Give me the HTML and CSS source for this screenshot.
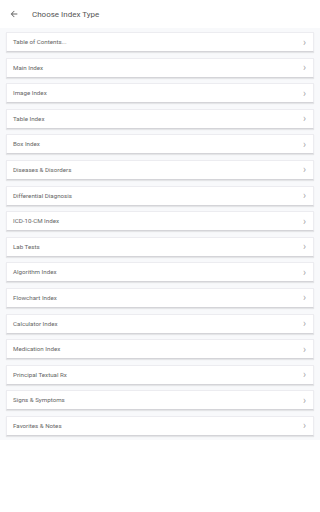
FILE: index.html
```html
<!DOCTYPE html>
<html lang="en">
<head>
    <meta charset="UTF-8">
    <meta name="viewport" content="width=device-width, initial-scale=1.0">
    <title>Choose Index Type</title>
    <link rel="stylesheet" href="styles.css">
</head>
<body>
    <div class="header">
        <svg class="back" viewBox="0 0 24 24" width="10" height="10"><path d="M20 11H7.8l5.6-5.6L12 4l-8 8 8 8 1.4-1.4L7.8 13H20z" fill="#666"/></svg>
        <h1>Choose Index Type</h1>
    </div>

    <div class="list">
        <div class="item"><span>Table of Contents...</span><i class="chev">&rsaquo;</i></div>
        <div class="item"><span>Main Index</span><i class="chev">&rsaquo;</i></div>
        <div class="item"><span>Image Index</span><i class="chev">&rsaquo;</i></div>
        <div class="item"><span>Table Index</span><i class="chev">&rsaquo;</i></div>
        <div class="item"><span>Box Index</span><i class="chev">&rsaquo;</i></div>
        <div class="item"><span>Diseases &amp; Disorders</span><i class="chev">&rsaquo;</i></div>
        <div class="item"><span>Differential Diagnosis</span><i class="chev">&rsaquo;</i></div>
        <div class="item"><span>ICD-10-CM Index</span><i class="chev">&rsaquo;</i></div>
        <div class="item"><span>Lab Tests</span><i class="chev">&rsaquo;</i></div>
        <div class="item"><span>Algorithm Index</span><i class="chev">&rsaquo;</i></div>
        <div class="item"><span>Flowchart Index</span><i class="chev">&rsaquo;</i></div>
        <div class="item"><span>Calculator Index</span><i class="chev">&rsaquo;</i></div>
        <div class="item"><span>Medication Index</span><i class="chev">&rsaquo;</i></div>
        <div class="item"><span>Principal Textual Rx</span><i class="chev">&rsaquo;</i></div>
        <div class="item"><span>Signs &amp; Symptoms</span><i class="chev">&rsaquo;</i></div>
        <div class="item"><span>Favorites &amp; Notes</span><i class="chev">&rsaquo;</i></div>
    </div>
</body>
</html>
```

FILE: styles.css
```css
body {
    margin: 0;
    font-family: Roboto, "Noto Sans", sans-serif;
    background: #fff;
    color: #444;
}
.header {
    height: 28px;
    display: flex;
    align-items: center;
    padding-left: 9px;
}
.back {
    margin-right: 13px;
}
.header h1 {
    font-size: 8px;
    font-weight: 400;
    color: #555;
    margin: 0;
}
.list {
    background: #f8f9fb;
    padding: 4px 6px 4px 6px;
}
.item {
    height: 18px;
    margin-bottom: 5.6px;
    background: #fff;
    border: 1px solid #ececf0;
    border-bottom: 1px solid #d4d4d8;
    box-shadow: 0 1px 1px rgba(0, 0, 0, 0.08);
    display: flex;
    align-items: center;
    justify-content: space-between;
    padding: 0 7px 0 6px;
    font-size: 6.2px;
    color: #666;
}
.item:last-child {
    margin-bottom: 0;
}
.chev {
    font-style: normal;
    font-size: 10px;
    color: #aaa;
}
```
